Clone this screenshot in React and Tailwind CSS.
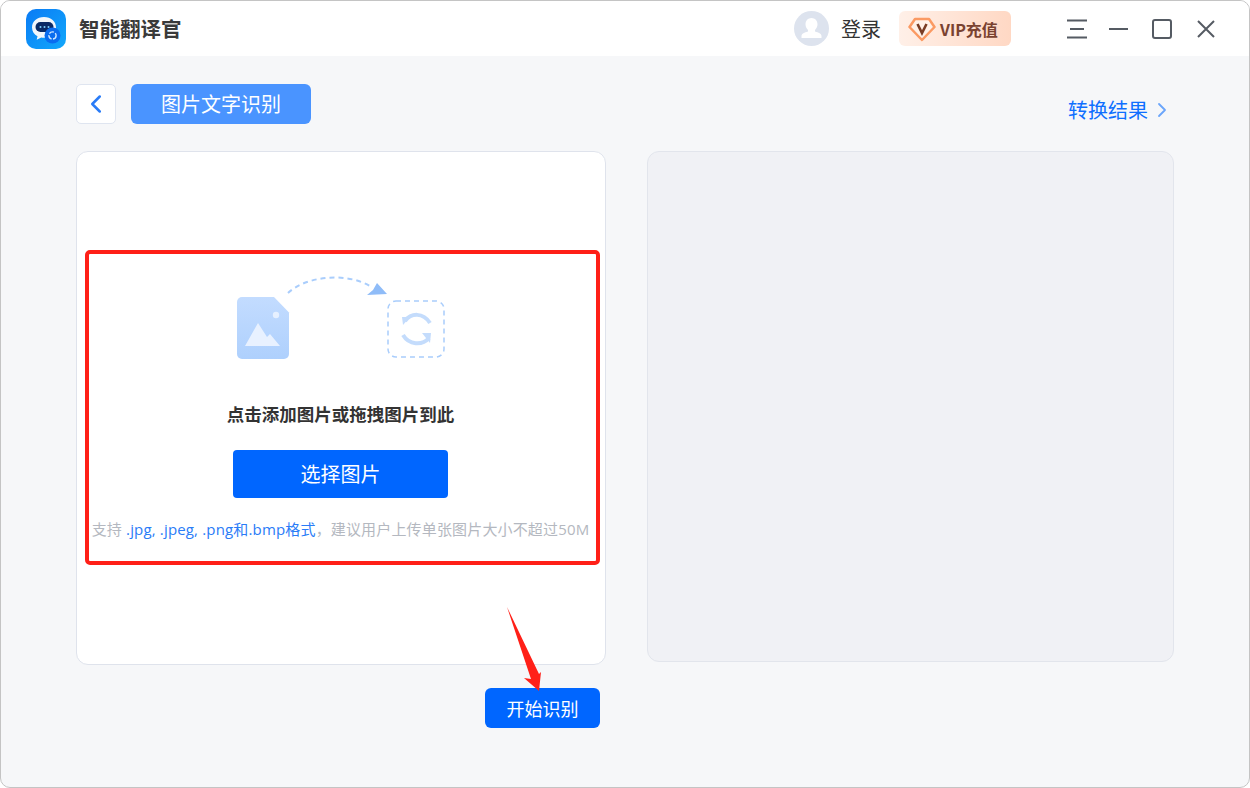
import { ChevronLeft, ChevronRight } from 'lucide-react'

const cjk = { fontFamily: '"Noto Sans CJK SC", "Liberation Sans", sans-serif' }

function AppLogo() {
  return (
    <svg width="40" height="40" viewBox="0 0 40 40" className="shrink-0">
      <defs>
        <linearGradient id="logoBg" x1="0" y1="0" x2="1" y2="1">
          <stop offset="0" stopColor="#0a7bf5" />
          <stop offset="1" stopColor="#12a8fb" />
        </linearGradient>
      </defs>
      <rect width="40" height="40" rx="10" fill="url(#logoBg)" />
      <path d="M18 8C11 8 6 12.500 6 18.500c0 3.800 2.200 7 5.500 8.800l-.8 3.500 4.600-2.400c.9.200 1.800.3 2.700.3 7 0 12-4.400 12-10.200C30 12.500 25 8 18 8z" fill="#f2f6fb" />
      <rect x="9.500" y="13" width="18" height="10" rx="5" fill="#0b2a66" />
      <circle cx="14.500" cy="18" r="1" fill="#7fd0ff" />
      <circle cx="18.500" cy="18" r="1" fill="#7fd0ff" />
      <circle cx="22.500" cy="18" r="1" fill="#7fd0ff" />
      <circle cx="26.500" cy="26.500" r="8" fill="#0a6cf0" />
      <circle cx="26.500" cy="26.500" r="3.600" fill="none" stroke="#cfe6ff" strokeWidth="1.400" strokeDasharray="5 1.500" />
    </svg>
  )
}

function VipGem() {
  return (
    <svg width="28" height="28" viewBox="0 0 28 28" className="shrink-0">
      <path d="M7 4h14l5.500 8L14 25 1.500 12z" fill="#fff1e8" stroke="#fb9a63" strokeWidth="2.500" strokeLinejoin="round" />
      <path d="M9.500 9l4.500 9 4.500-9" fill="none" stroke="#7a3d25" strokeWidth="2.600" />
    </svg>
  )
}

function UploadArt() {
  return (
    <svg width="212" height="84" viewBox="0 0 212 84" className="overflow-visible">
      <defs>
        <linearGradient id="fileFill" x1="0" y1="0" x2="0" y2="1">
          <stop offset="0" stopColor="#c3dcff" />
          <stop offset="1" stopColor="#aed0fd" />
        </linearGradient>
      </defs>
      {/* file */}
      <path d="M5 21h32l15 15.500V78a5 5 0 0 1-5 5H5a5 5 0 0 1-5-5V26a5 5 0 0 1 5-5z" fill="url(#fileFill)" transform="translate(1 0)" />
      <circle cx="40" cy="39" r="3.200" fill="#e6f0ff" />
      <path d="M9 70L22 47l9 14 3-3 10 12z" fill="#e8f1ff" />
      {/* arrow */}
      <path d="M52 17C70 0 110 -4 134 10" fill="none" stroke="#a9cdfc" strokeWidth="2" strokeDasharray="5 4" />
      <path d="M131 19l20-1-10-11-4 7z" fill="#8fbcf8" />
      {/* target */}
      <rect x="152" y="25" width="56" height="56" rx="8" fill="none" stroke="#a9cdfc" strokeWidth="1.500" strokeDasharray="5 4" />
      <path d="M169 45c6-8 18-9 25 2" fill="none" stroke="#c4dcfc" strokeWidth="4" />
      <path d="M166 41h8l-7 8z" fill="#c4dcfc" />
      <path d="M167 59c6 10 19 11 26 3" fill="none" stroke="#c4dcfc" strokeWidth="4" />
      <path d="M186 57h9l-1 10z" fill="#c4dcfc" />
    </svg>
  )
}

export default function App() {
  return (
    <div style={cjk} className="relative w-[1250px] h-[788px] overflow-hidden bg-[#f6f7f9] rounded-[10px] border border-[#c4c4c4]">
      {/* title bar */}
      <header className="h-[55px] bg-white flex items-center pl-[25px] pr-[34px]">
        <AppLogo />
        <span className="ml-[13px] text-[20.500px] font-bold text-[#3a3a3a] leading-none">智能翻译官</span>
        <div className="ml-auto flex items-center">
          <svg width="35" height="35" viewBox="0 0 35 35">
            <circle cx="17.500" cy="17.500" r="17.500" fill="#dde3ee" />
            <path d="M17.500 7c-3.600 0-6 2.800-6 6.300 0 2.500 1.100 4.400 2.500 5.700v1.500c-3.500 1-6.500 2.200-6.500 4.500V27h20v-2c0-2.300-3-3.500-6.500-4.500V19c1.400-1.300 2.500-3.200 2.500-5.700C23.500 9.800 21.100 7 17.500 7z" fill="#fff" />
          </svg>
          <span className="ml-[12px] text-[20px] text-[#333] leading-none">登录</span>
          <div className="ml-[18px] w-[112px] h-[35px] rounded-[6px] bg-gradient-to-r from-[#fff0e8] to-[#ffd8c4] flex items-center pl-[9px]">
            <VipGem />
            <span className="ml-[4px] text-[16px] font-bold text-[#7a4230] leading-none">VIP充值</span>
          </div>
          {/* window controls */}
          <svg width="20" height="20" viewBox="0 0 20 20" className="ml-[56px]">
            <path d="M0 1.500h20M3 10h14M0 18.500h20" stroke="#555b63" strokeWidth="2" />
          </svg>
          <svg width="20" height="20" viewBox="0 0 20 20" className="ml-[22px]">
            <path d="M0 10h19" stroke="#555b63" strokeWidth="2" />
          </svg>
          <svg width="20" height="20" viewBox="0 0 20 20" className="ml-[23px]">
            <rect x="1" y="1" width="18" height="18" rx="2" fill="none" stroke="#555b63" strokeWidth="2" />
          </svg>
          <svg width="18" height="18" viewBox="0 0 18 18" className="ml-[25px]">
            <path d="M1 1l16 16M17 1L1 17" stroke="#555b63" strokeWidth="2" />
          </svg>
        </div>
      </header>

      <main className="pl-[75px] pr-[75px]">
        {/* toolbar */}
        <div className="flex items-start pt-[28px] h-[95px]">
          <button className="w-[40px] h-[40px] bg-white border border-[#dfe5f0] rounded-[5px] flex items-center justify-center">
            <ChevronLeft size={30} strokeWidth={2} className="text-[#2a7cf7]" />
          </button>
          <div className="ml-[15px] w-[180px] h-[40px] bg-[#4a94ff] rounded-[6px] flex items-center justify-center text-white text-[20px]">
            图片文字识别
          </div>
          <div className="ml-auto mt-[12px] flex items-center text-[#0f6fff] text-[20px] leading-[28px]">
            转换结果
            <ChevronRight size={24} strokeWidth={1.800} className="ml-[2px] text-[#6aa5fb]" />
          </div>
        </div>

        <div className="flex items-start gap-[41px]">
          {/* upload card */}
          <section>
            <div className="w-[530px] h-[514px] bg-white border border-[#dfe3ec] rounded-[12px] pt-[98px] pl-[8px]">
              <div className="w-[515px] h-[315px] border-[4px] border-[#ff2018] rounded-[5px] pr-[4px] flex flex-col items-center">
                <div className="mt-[22px] ml-[2px]">
                  <UploadArt />
                </div>
                <p className="mt-[42px] text-[17.500px] font-bold text-[#333] leading-[24px]">点击添加图片或拖拽图片到此</p>
                <button className="mt-[24px] w-[215px] h-[48px] bg-[#0066ff] rounded-[4px] text-white text-[20px]">选择图片</button>
                <p className="mt-[21px] text-[15px] tracking-[0.16px] leading-[20px] whitespace-nowrap text-[#b4b8c0] font-['Open_Sans','Noto_Sans_CJK_SC',sans-serif]">
                  支持 <span className="text-[#2a7cf7]">.jpg, .jpeg, .png和.bmp格式</span>，建议用户上传单张图片大小不超过50M
                </p>
              </div>
            </div>
            <div className="mt-[23px] ml-[409px] w-[115px] h-[40px] bg-[#0066ff] rounded-[6px] flex items-center justify-center text-white text-[18px]">
              开始识别
            </div>
          </section>

          {/* result panel */}
          <section className="w-[527px] h-[511px] bg-[#f0f1f5] border border-[#e2e5ec] rounded-[12px]" />
        </div>
      </main>

      {/* red annotation arrow */}
      <svg width="42" height="92" viewBox="0 0 42 92" className="absolute left-[499px] top-[599px]">
        <path d="M7 7l32 67 2-2-2 19-15-13 7 1z" fill="#ff2018" />
      </svg>
    </div>
  )
}
